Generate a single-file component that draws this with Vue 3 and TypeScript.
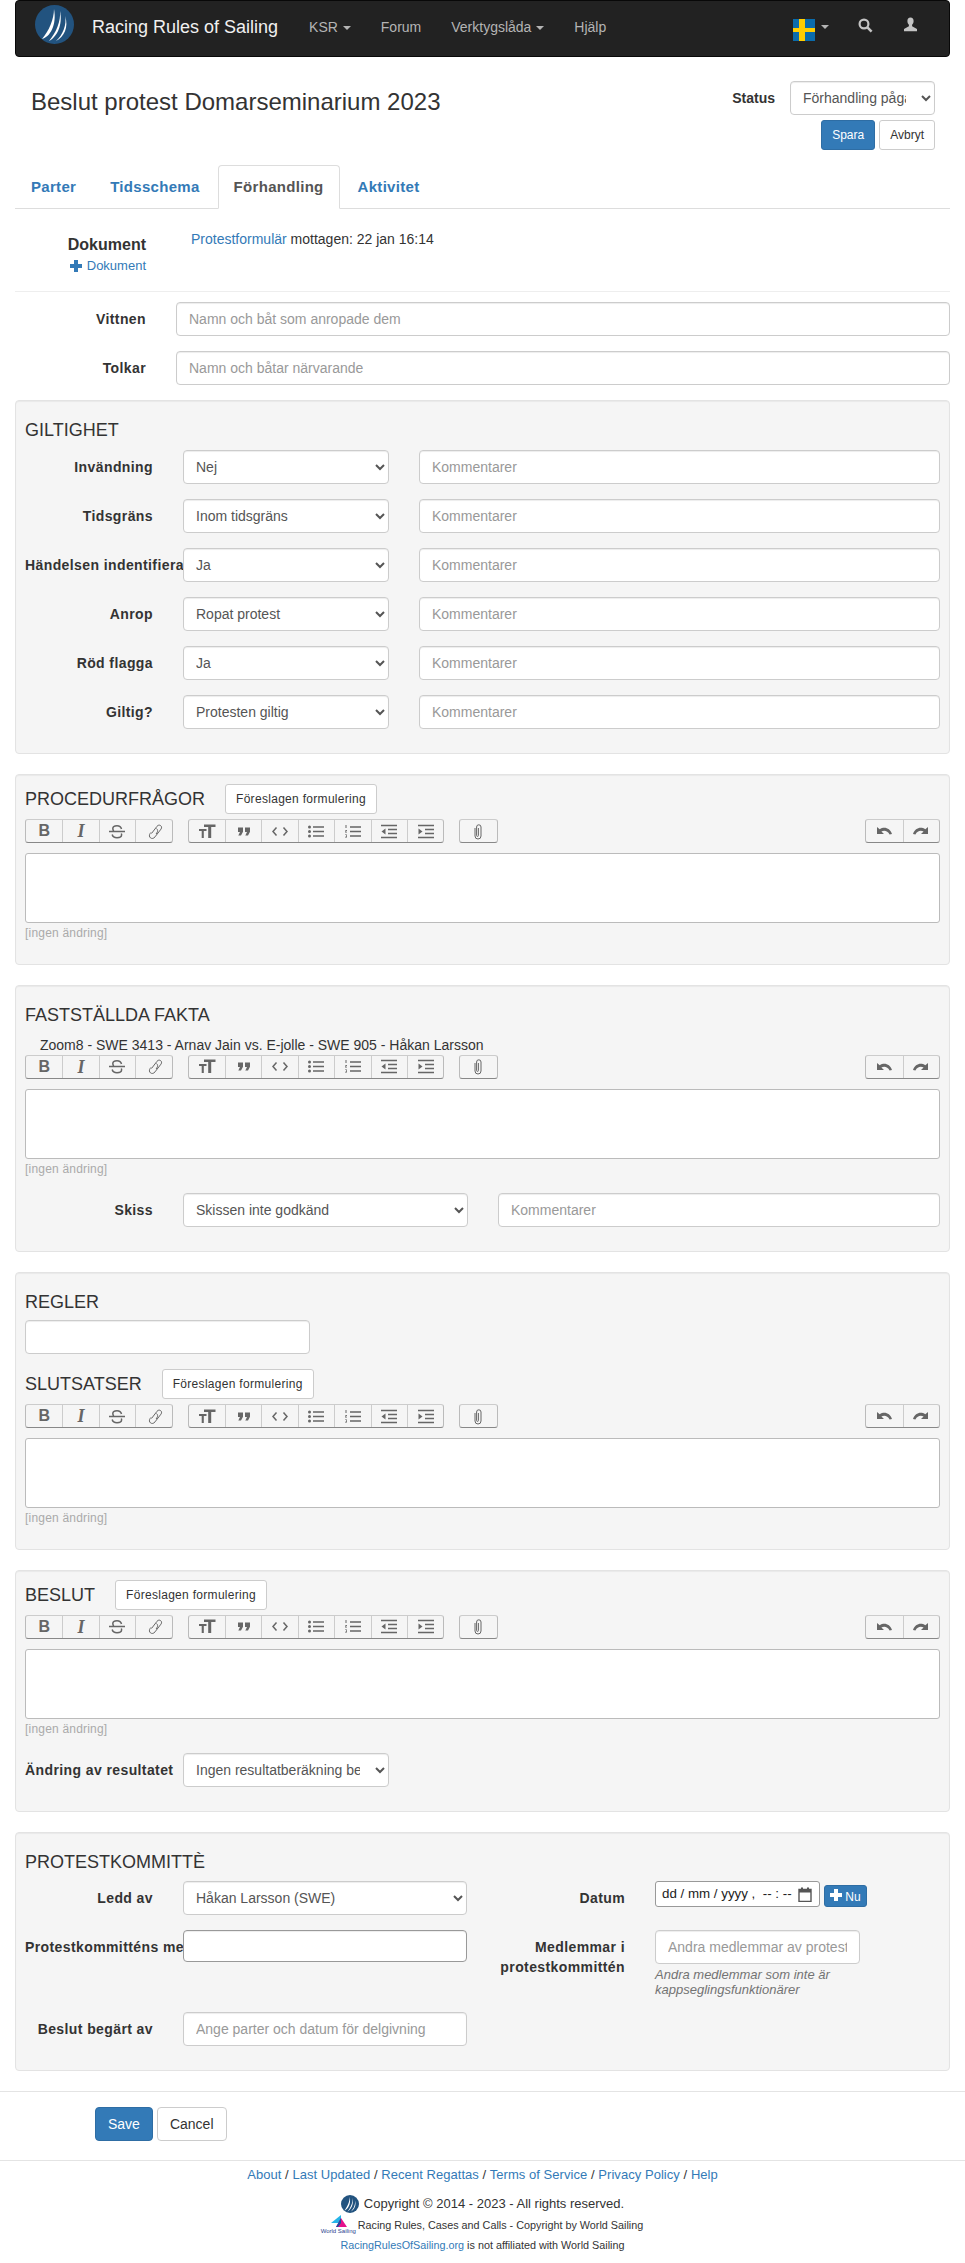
<script setup lang="ts">
interface Tool {
  name: string
  text?: string
  fill?: string
  stroke?: string
  thin?: boolean
}

interface EditorPanel {
  title: string
  suggest: boolean
  note?: string
  rules?: boolean
  after?: 'sketch' | 'outcome'
}

const validity = [
  { label: 'Invändning', value: 'Nej' },
  { label: 'Tidsgräns', value: 'Inom tidsgräns' },
  { label: 'Händelsen indentifierad', value: 'Ja' },
  { label: 'Anrop', value: 'Ropat protest' },
  { label: 'Röd flagga', value: 'Ja' },
  { label: 'Giltig?', value: 'Protesten giltig' },
]

const editorPanels: EditorPanel[] = [
  { title: 'PROCEDURFRÅGOR', suggest: true },
  {
    title: 'FASTSTÄLLDA FAKTA',
    suggest: false,
    note: 'Zoom8 - SWE 3413 - Arnav Jain vs. E-jolle - SWE 905 - Håkan Larsson',
    after: 'sketch',
  },
  { title: 'SLUTSATSER', suggest: true, rules: true },
  { title: 'BESLUT', suggest: true, after: 'outcome' },
]

const leftTools: Tool[][] = [
  [
    { name: 'bold', text: 'B' },
    { name: 'italic', text: 'I' },
    {
      name: 'strike',
      stroke: 'M2 8.500h16M14.500 6C14 3.800 12.500 2.800 10 2.800 7.500 2.800 5.800 4 5.800 5.800c0 .9.300 1.500 1 2M14.300 10.500c.2.400.3.800.3 1.200 0 2-1.800 3-4.600 3-2.500 0-4.300-1-4.800-3.200',
    },
    {
      name: 'link',
      thin: true,
      stroke: 'M7.500 10.500 13 3.300c1-1.300 2.500-1.500 3.600-.7s1.300 2.200.4 3.500l-6 7.800c-1.300 1.700-3.200 2-4.500 1s-1.500-2.800-.3-4.500l.8-1M12.500 5.500c1.300 1 1.500 2.800.3 4.500l-.8 1',
    },
  ],
  [
    { name: 'heading', fill: 'M7 1.500h11.500v2.500h-4.300v11h-3v-11H7zM2 6h7.500v2H6.800v7H4.700V8H2z' },
    { name: 'quote', fill: 'M4 4.500h5v4.300L7 12.500H4.300L6 9H4zM11 4.500h5v4.300l-2 3.700h-2.700L13 9h-2z' },
    { name: 'code', stroke: 'M6.500 4.500 3 8.500l3.500 4M13.500 4.500l3.500 4-3.500 4' },
    {
      name: 'bullets',
      fill: 'M2 4a1.500 1.500 0 1 1 3 0 1.500 1.500 0 0 1-3 0zM2 8.500a1.500 1.500 0 1 1 3 0 1.500 1.500 0 0 1-3 0zM2 13a1.500 1.500 0 1 1 3 0 1.500 1.500 0 0 1-3 0z',
      stroke: 'M7 4h11M7 8.500h11M7 13h11',
    },
    {
      name: 'numbers',
      stroke: 'M7 4h11M7 8.500h11M7 13h11',
      fill: 'M2.500 2h1v3h-1zM2 7h2v.600L3 9h1v.600H2V9l1-1.400H2zM2 11.500h2v3H2V14h1.300v-.500H2.500V13h.800v-.900H2z',
    },
    {
      name: 'outdent',
      stroke: 'M2 2.500h16M9 6.500h9M9 10.500h9M2 14.500h16',
      fill: 'M6.500 5.500v6L2.500 8.500z',
    },
    {
      name: 'indent',
      stroke: 'M2 2.500h16M9 6.500h9M9 10.500h9M2 14.500h16',
      fill: 'M2.500 5.500v6l4-3z',
    },
  ],
  [
    {
      name: 'attach',
      thin: true,
      stroke: 'M7 5v8a3 3 0 0 0 6 0V4a2.200 2.200 0 0 0-4.400 0v8.500a.900.900 0 0 0 1.800 0V5',
    },
  ],
]

const rightTools: Tool[] = [
  { name: 'undo', fill: 'M3 3v7h7L7.400 7.500c3-1.600 6.300-.6 8.200 3l2.400-.6C16 4.300 10.500 2 5.700 5.300z' },
  { name: 'redo', fill: 'M17 3v7h-7l2.600-2.500c-3-1.600-6.300-.6-8.200 3L2 9.900C4 4.300 9.500 2 14.300 5.300z' },
]

const footerLinks = ['About', 'Last Updated', 'Recent Regattas', 'Terms of Service', 'Privacy Policy', 'Help']
</script>

<template>
  <div class="page">
    <nav class="navbar">
      <svg class="logo" width="39" height="39" viewBox="0 0 39 39">
        <circle cx="19.500" cy="19.500" r="19.500" fill="#22537f" />
        <path d="M19 4C19 14 14 26 7 34c8-2 15-14 12-30zM25 6c1 10-4 22-11 30 8-4 14-16 11-30zM30 11c2 8-2 19-9 25 8-4 13-14 9-25z" fill="#fff" />
      </svg>
      <a class="brand">Racing Rules of Sailing</a>
      <a class="nav-link">KSR <i class="caret"></i></a>
      <a class="nav-link">Forum</a>
      <a class="nav-link">Verktygslåda <i class="caret"></i></a>
      <a class="nav-link">Hjälp</a>
      <span class="spacer"></span>
      <svg class="flag" width="22" height="22" viewBox="0 0 22 22">
        <rect width="22" height="22" fill="#0a6bab" />
        <rect x="6" width="6" height="22" fill="#fecc00" />
        <rect y="9" width="22" height="4" fill="#fecc00" />
      </svg>
      <i class="caret flag-caret"></i>
      <svg class="search" width="15" height="15" viewBox="0 0 15 15">
        <circle cx="6" cy="6" r="4.400" fill="none" stroke="#c4c4c4" stroke-width="2.200" />
        <path d="M9.400 9.400 13.600 13.600" stroke="#c4c4c4" stroke-width="2.600" />
      </svg>
      <svg class="user" width="15" height="15" viewBox="0 0 15 15">
        <path d="M7.500.5C5.400.5 4.400 2 4.400 4c0 1.600.7 3 1.500 3.800v1.400L1 12v2.200h13V12L9.100 9.200V7.800C9.900 7 10.600 5.600 10.600 4c0-2-1-3.500-3.100-3.500z" fill="#c4c4c4" />
      </svg>
    </nav>

    <main class="container">
      <header class="head">
        <h3 class="title">Beslut protest Domarseminarium 2023</h3>
        <div class="head-side">
          <div class="status-row">
            <label class="status-label">Status</label>
            <select class="control status-select"><option>Förhandling pågår</option></select>
          </div>
          <div class="head-buttons">
            <button class="btn sm primary">Spara</button>
            <button class="btn sm">Avbryt</button>
          </div>
        </div>
      </header>

      <ul class="tabs">
        <li>Parter</li>
        <li>Tidsschema</li>
        <li class="active">Förhandling</li>
        <li>Aktivitet</li>
      </ul>

      <section class="docs">
        <div class="docs-left">
          <strong>Dokument</strong>
          <a class="add-doc">
            <svg width="12" height="12" viewBox="0 0 12 12"><path d="M4 0h4v4h4v4H8v4H4V8H0V4h4z" fill="#337ab7" /></svg>
            Dokument
          </a>
        </div>
        <div class="docs-right"><a>Protestformulär</a> mottagen: 22 jan 16:14</div>
      </section>
      <hr class="docs-rule" />

      <div class="witness-row">
        <label class="label">Vittnen</label>
        <input class="control" placeholder="Namn och båt som anropade dem" />
      </div>
      <div class="witness-row">
        <label class="label">Tolkar</label>
        <input class="control" placeholder="Namn och båtar närvarande" />
      </div>

      <section class="well">
        <h4>GILTIGHET</h4>
        <div v-for="row in validity" :key="row.label" class="valid-row">
          <label class="label">{{ row.label }}</label>
          <select class="control"><option>{{ row.value }}</option></select>
          <input class="control" placeholder="Kommentarer" />
        </div>
      </section>

      <section v-for="panel in editorPanels" :key="panel.title" class="well">
        <template v-if="panel.rules">
          <h4 class="rules-title">REGLER</h4>
          <input class="control rules-input" />
        </template>
        <div class="heading-row" :class="{ plain: !panel.suggest }">
          <h4>{{ panel.title }}</h4>
          <button v-if="panel.suggest" class="btn sm suggest">Föreslagen formulering</button>
        </div>
        <div v-if="panel.note" class="note">{{ panel.note }}</div>
        <div class="toolbar">
          <div v-for="(group, i) in leftTools" :key="i" class="tool-group">
            <span v-for="tool in group" :key="tool.name" class="tool">
              <span v-if="tool.text" :class="`glyph-${tool.name}`">{{ tool.text }}</span>
              <svg v-else width="20" height="17" viewBox="0 0 20 17">
                <path v-if="tool.fill" :d="tool.fill" fill="#666" />
                <path v-if="tool.stroke" :d="tool.stroke" fill="none" stroke="#666" :stroke-width="tool.thin ? 1 : 1.500" />
              </svg>
            </span>
          </div>
          <span class="spacer"></span>
          <div class="tool-group">
            <span v-for="tool in rightTools" :key="tool.name" class="tool">
              <svg width="20" height="14" viewBox="0 0 20 14"><path :d="tool.fill" fill="#666" /></svg>
            </span>
          </div>
        </div>
        <div class="editor"></div>
        <small class="muted">[ingen ändring]</small>
        <div v-if="panel.after === 'sketch'" class="sketch-row">
          <label class="label">Skiss</label>
          <select class="control"><option>Skissen inte godkänd</option></select>
          <input class="control" placeholder="Kommentarer" />
        </div>
        <div v-if="panel.after === 'outcome'" class="outcome-row">
          <label class="label">Ändring av resultatet</label>
          <select class="control"><option>Ingen resultatberäkning behövs</option></select>
        </div>
      </section>

      <section class="well committee">
        <h4>PROTESTKOMMITTÈ</h4>
        <div class="committee-grid">
          <label class="label">Ledd av</label>
          <select class="control"><option>Håkan Larsson (SWE)</option></select>
          <label class="label">Datum</label>
          <div class="date-cell">
            <div class="date-input">
              <span>dd / mm / yyyy ,&nbsp; -- : --</span>
              <svg width="14" height="15" viewBox="0 0 14 15"><path d="M1 2.500h12v12H1z" fill="none" stroke="#555" stroke-width="1.400" /><path d="M1 2h12v3.500H1zM3 .500h2v2H3zM9 .500h2v2H9z" fill="#555" /></svg>
            </div>
            <button class="btn xs primary">
              <svg width="12" height="12" viewBox="0 0 12 12"><path d="M4 0h4v4h4v4H8v4H4V8H0V4h4z" fill="#fff" /></svg>
              Nu
            </button>
          </div>

          <label class="label">Protestkommitténs medlemmar</label>
          <input class="control members" />
          <label class="label wrap">Medlemmar i protestkommittén</label>
          <div class="others">
            <input class="control" placeholder="Andra medlemmar av protestkommittén" />
            <p class="help">Andra medlemmar som inte är kappseglingsfunktionärer</p>
          </div>

          <label class="label">Beslut begärt av</label>
          <input class="control" placeholder="Ange parter och datum för delgivning" />
        </div>
      </section>
    </main>

    <hr class="page-rule" />
    <div class="actions">
      <button class="btn primary">Save</button>
      <button class="btn">Cancel</button>
    </div>
    <hr class="page-rule" />

    <footer class="footer">
      <div class="footer-links">
        <template v-for="(link, i) in footerLinks" :key="link">
          <a>{{ link }}</a><span v-if="i < footerLinks.length - 1"> / </span>
        </template>
      </div>
      <div class="copyright">
        <svg width="18" height="18" viewBox="0 0 39 39">
          <circle cx="19.500" cy="19.500" r="19.500" fill="#22537f" />
          <path d="M19 4C19 14 14 26 7 34c8-2 15-14 12-30zM25 6c1 10-4 22-11 30 8-4 14-16 11-30zM30 11c2 8-2 19-9 25 8-4 13-14 9-25z" fill="#fff" />
        </svg>
        <span>Copyright © 2014 - 2023 - All rights reserved.</span>
      </div>
      <div class="cases">
        <span class="ws-logo">
          <svg width="20" height="13" viewBox="0 0 20 13">
            <path d="M13 0v8H3z" fill="#25b4e8" />
            <path d="M13 3l6 9H8z" fill="#e5128c" />
            <path d="M13 3v5l-3 4H8z" fill="#1f4f9e" />
          </svg>
          <span class="ws-name">World Sailing</span>
        </span>
        <span>Racing Rules, Cases and Calls - Copyright by World Sailing</span>
      </div>
      <div class="disclaimer"><a>RacingRulesOfSailing.org</a> is not affiliated with World Sailing</div>
    </footer>
  </div>
</template>

<style>
body {
  font-family: "Liberation Sans", Arial, sans-serif;
  font-size: 14px;
  line-height: 20px;
  color: #333;
}
</style>

<style scoped>
.page {
  width: 965px;
  height: 2263px;
  overflow: hidden;
  background: #fff;
}

a {
  color: #337ab7;
}

.spacer {
  flex: 1;
}

.navbar {
  display: flex;
  align-items: center;
  box-sizing: border-box;
  height: 57px;
  margin: 0 15px;
  background: #222;
  border: 1px solid #080808;
  border-radius: 4px;
}

.logo {
  margin: 0 0 8px 19px;
}

.brand {
  margin: 0 16px 4px 18px;
  font-size: 18px;
  color: #f0f0f0;
}

.nav-link {
  padding: 0 15px;
  margin-bottom: 3px;
  color: #b4b4b4;
}

.caret {
  display: inline-block;
  vertical-align: middle;
  width: 0;
  height: 0;
  margin-left: 1px;
  border-top: 4px solid #b4b4b4;
  border-left: 4px solid transparent;
  border-right: 4px solid transparent;
}

.flag {
  margin-top: 3px;
}

.flag-caret {
  margin: 0 29px 3px 6px;
}

.search {
  margin-bottom: 6px;
}

.user {
  margin: 0 31px 8px 30px;
}

.container {
  padding: 0 15px;
}

.head {
  display: flex;
  justify-content: space-between;
  height: 108px;
  box-sizing: border-box;
  padding: 24px 15px 0 16px;
}

.title {
  margin: 8px 0 0;
  font-size: 24px;
  font-weight: 500;
  line-height: 26px;
}

.head-side {
  display: flex;
  flex-direction: column;
  align-items: flex-end;
  gap: 5px;
}

.status-row {
  display: flex;
  align-items: center;
  gap: 15px;
}

.status-label {
  font-weight: 700;
}

.control {
  display: block;
  box-sizing: border-box;
  width: 100%;
  height: 34px;
  padding: 6px 12px;
  font-family: inherit;
  font-size: 14px;
  color: #555;
  background: #fff;
  border: 1px solid #ccc;
  border-radius: 4px;
  box-shadow: inset 0 1px 1px rgba(0, 0, 0, 0.075);
}

select.control {
  padding-left: 8px;
}

.control::placeholder {
  color: #999;
}

.status-select {
  width: 145px;
}

.head-buttons {
  display: flex;
  gap: 4px;
}

.btn {
  box-sizing: border-box;
  height: 34px;
  padding: 6px 12px;
  font-family: inherit;
  font-size: 14px;
  color: #333;
  background: #fff;
  border: 1px solid #ccc;
  border-radius: 4px;
}

.btn.sm {
  height: 30px;
  padding: 5px 10px;
  font-size: 12px;
  border-radius: 3px;
}

.btn.xs {
  height: 22px;
  padding: 1px 5px;
  font-size: 12px;
  border-radius: 3px;
}

.btn.primary {
  color: #fff;
  background: #337ab7;
  border-color: #2e6da4;
}

.btn.suggest {
  letter-spacing: 0.3px;
}

.tabs {
  display: flex;
  gap: 2px;
  margin: 0;
  padding: 0;
  list-style: none;
  border-bottom: 1px solid #ddd;
}

.tabs li {
  margin-bottom: -1px;
  padding: 10px 15px;
  font-size: 15px;
  font-weight: 700;
  letter-spacing: 0.3px;
  line-height: 22px;
  color: #337ab7;
  border: 1px solid transparent;
  border-radius: 4px 4px 0 0;
}

.tabs li.active {
  color: #555;
  background: #fff;
  border-color: #ddd #ddd #fff;
}

.docs {
  display: flex;
  height: 82px;
}

.docs-left {
  display: flex;
  flex-direction: column;
  align-items: flex-end;
  width: 131px;
  padding-top: 25px;
  box-sizing: border-box;
}

.docs-left strong {
  font-size: 16px;
  line-height: 22px;
}

.add-doc {
  display: flex;
  align-items: center;
  gap: 5px;
  margin-top: 2px;
  font-size: 13px;
  line-height: 16px;
}

.docs-right {
  margin: 20px 0 0 45px;
}

.docs-rule {
  margin: 0 0 10px;
  border: 0;
  border-top: 1px solid #eee;
}

.label {
  padding-top: 7px;
  box-sizing: border-box;
  font-weight: 700;
  letter-spacing: 0.4px;
  text-align: right;
  white-space: nowrap;
}

.witness-row {
  display: grid;
  grid-template-columns: 131px 1fr;
  column-gap: 30px;
  margin-bottom: 15px;
}

.well {
  box-sizing: border-box;
  margin-bottom: 20px;
  padding: 9px;
  background: #f5f5f5;
  border: 1px solid #e3e3e3;
  border-radius: 4px;
  box-shadow: inset 0 1px 1px rgba(0, 0, 0, 0.05);
}

h4 {
  margin: 10px 0;
  font-size: 18px;
  font-weight: 500;
  line-height: 20px;
}

.committee h4 {
  margin-bottom: 9px;
}

.valid-row,
.sketch-row,
.outcome-row {
  display: grid;
  column-gap: 30px;
  margin-bottom: 15px;
}

.valid-row {
  grid-template-columns: 128px 206px 1fr;
}

.sketch-row {
  grid-template-columns: 128px 285px 1fr;
  margin-top: 3px;
}

.outcome-row {
  grid-template-columns: 128px 206px;
  margin-top: 3px;
}

.rules-title {
  margin-bottom: 8px;
}

.rules-input {
  width: 285px;
  margin-bottom: 15px;
}

.heading-row {
  display: flex;
  align-items: center;
  gap: 20px;
  margin-bottom: 5px;
}

.heading-row h4 {
  margin: 0;
}

.heading-row.plain {
  margin: 10px 0 0;
}

.note {
  margin-top: 10px;
  padding-left: 15px;
}

.toolbar {
  display: flex;
  gap: 15px;
  height: 24px;
  margin-bottom: 10px;
}

.tool-group {
  display: flex;
  box-sizing: border-box;
  height: 24px;
  border: 1px solid #bbb;
  border-top-color: #ccc;
  border-bottom-color: #888;
  border-radius: 3px;
}

.tool {
  display: flex;
  align-items: center;
  justify-content: center;
  box-sizing: border-box;
  width: 36.400px;
  border-left: 1px solid #ccc;
}

.tool:first-child {
  border-left: 0;
}

.glyph-bold {
  font-size: 16px;
  font-weight: 700;
  color: #666;
}

.glyph-italic {
  font-family: "Liberation Serif", serif;
  font-size: 18px;
  font-weight: 700;
  font-style: italic;
  color: #666;
}

.editor {
  box-sizing: border-box;
  height: 70px;
  background: #fff;
  border: 1px solid #bbb;
  border-radius: 3px;
}

.muted {
  display: block;
  height: 31.500px;
  padding-top: 2px;
  box-sizing: border-box;
  font-size: 12px;
  letter-spacing: 0.2px;
  line-height: 17px;
  color: #aaa;
}

.committee-grid {
  display: grid;
  grid-template-columns: 128px 284px 128px 1fr;
  column-gap: 30px;
  row-gap: 15px;
  margin-bottom: 15px;
}

.wrap {
  white-space: normal;
}

.date-cell {
  display: flex;
  align-items: flex-end;
  gap: 4px;
  height: 26px;
}

.date-input {
  display: flex;
  align-items: center;
  justify-content: space-between;
  box-sizing: border-box;
  width: 165px;
  height: 26px;
  padding: 0 7px 0 6px;
  font-size: 13.330px;
  background: #fff;
  border: 1px solid #999;
  border-radius: 3px;
  color: #222;
  white-space: nowrap;
}

.members {
  height: 32px;
  border-color: #999;
}

.others {
  width: 205px;
}

.help {
  margin: 4px 0 0;
  font-size: 13px;
  font-style: italic;
  line-height: 14.500px;
  color: #737373;
}

.page-rule {
  margin: 0;
  border: 0;
  border-top: 1px solid #e4e4e4;
}

.actions {
  display: flex;
  gap: 4px;
  padding: 15px 0 19px 95px;
}

.footer {
  font-size: 10.800px;
  text-align: center;
}

.footer-links {
  margin-top: 4px;
  font-size: 13px;
  letter-spacing: 0.05px;
}

.copyright {
  display: flex;
  justify-content: center;
  align-items: center;
  gap: 5px;
  margin-top: 10px;
  font-size: 13px;
  line-height: 18px;
}

.cases {
  display: flex;
  justify-content: center;
  align-items: center;
  gap: 3px;
  margin-top: 2px;
  height: 19px;
}

.ws-logo {
  display: flex;
  flex-direction: column;
  align-items: center;
  width: 33px;
}

.ws-name {
  font-size: 6px;
  line-height: 6px;
  color: #2a3f8f;
  white-space: nowrap;
}

.disclaimer {
  margin-top: 1px;
}
</style>
